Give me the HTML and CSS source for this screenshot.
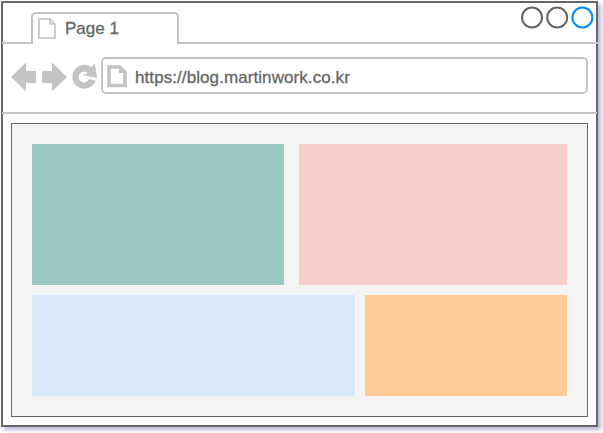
FILE: index.html
```
<!DOCTYPE html>
<html lang="en">
<head>
<meta charset="utf-8">
<title>Page 1</title>
<link rel="stylesheet" href="styles.css">
</head>
<body>
<div class="window">
  <header class="tabs">
    <div class="tab-lead"></div>
    <div class="tab">
      <svg class="tab-icon" width="18" height="21" viewBox="0 0 18 21"><path d="M1 1H12L17 6V20H1Z M12 1V6H17" fill="none" stroke="#c4c4c4" stroke-width="1.7"/></svg>
      <span>Page 1</span>
    </div>
    <div class="tab-rest">
      <svg class="controls" width="76" height="26" viewBox="0 0 76 26" fill="none" stroke-width="2"><circle cx="12" cy="13.5" r="10" stroke="#666"/><circle cx="37.2" cy="13.5" r="10" stroke="#666"/><circle cx="62.4" cy="13.5" r="10" stroke="#008cff"/></svg>
    </div>
  </header>
  <nav class="toolbar">
    <svg class="nav-icons" width="88" height="30" viewBox="0 0 88 30" fill="#c4c4c4">
      <path d="M0 15L15 0.5V9H25V21H15V29.5Z"/>
      <path d="M56 15L41 0.5V9H31V21H41V29.5Z"/>
      <path d="M80.5 5L83.7 1.5L86.2 15.9L71.7 13.1L76.8 11.2A5.4 5.4 0 1 0 78 17L84.7 18.8A12 12 0 1 1 80.5 5Z"/>
    </svg>
    <div class="address">
      <svg class="page-icon" width="20" height="23" viewBox="0 0 20 23"><path d="M2 2H13L18 7.3V20.5H2Z" fill="none" stroke="#c4c4c4" stroke-width="3.6"/><path d="M12 3L17 8H12Z" fill="#c4c4c4"/></svg>
      <span>https://blog.martinwork.co.kr</span>
    </div>
  </nav>
  <main class="content">
    <div class="row row-top"><div class="block green"></div><div class="block pink"></div></div>
    <div class="row row-bottom"><div class="block blue"></div><div class="block orange"></div></div>
  </main>
</div>
</body>
</html>
```
FILE: styles.css
```
* { box-sizing: border-box; }
body {
  margin: 0;
  height: 433px;
  padding: 1px 0 0 1px;
  background: #fff;
  overflow: hidden;
  color: #666;
  font: 17px/20px "Liberation Sans", Arial, sans-serif;
  -webkit-text-stroke: 0.3px #666;
}
.window {
  width: 597px;
  height: 426px;
  border: 2px solid #666;
  background: #fff;
  box-shadow: 3px 3px 4px #b9b9d6;
}
.tabs {
  display: flex;
  height: 41px;
  margin: 0 -2px 0 -1px;
}
.tab-lead {
  width: 30px;
  border-bottom: 2px solid #c4c4c4;
}
.tab {
  display: flex;
  align-items: center;
  width: 148px;
  height: 32px;
  margin: 9px -1px 0 -1px;
  padding: 0 0 1px 5px;
  border: 2px solid #c4c4c4;
  border-bottom: 0;
  border-radius: 5px 5px 0 0;
}
.tab span { margin-left: 9px; }
.tab-icon, .controls, .nav-icons, .page-icon {
  display: block;
  flex: none;
}
.tab-rest {
  display: flex;
  flex: 1;
  justify-content: flex-end;
  padding: 1px 2px 0 0;
  border-bottom: 2px solid #c4c4c4;
}
.toolbar {
  display: flex;
  align-items: flex-start;
  height: 70px;
  margin: 0 -1px;
  padding: 13px 9px 0;
  border-bottom: 2px solid #c4c4c4;
}
.nav-icons { margin: 5px 2px 0 0; }
.page-icon { margin-top: 1px; }
.address {
  display: flex;
  align-items: center;
  width: 487px;
  flex: none;
  height: 37px;
  padding-left: 4px;
  border: 2px solid #c4c4c4;
  border-radius: 5px;
}
.address span {
  margin: 4px 0 0 8px;
  letter-spacing: 0.08px;
}
.content {
  display: flex;
  flex-direction: column;
  gap: 10px;
  width: 577px;
  height: 294px;
  margin: 9px 0 0 8px;
  padding: 20px;
  border: 1px solid #666;
  background: #f4f4f4;
}
.row { display: flex; }
.row-top { height: 141px; gap: 15px; }
.row-bottom { height: 101px; gap: 10px; }
.green { width: 252.4px; background: #9ac7bf; }
.pink { width: 267.6px; background: #f8cecc; }
.blue { width: 323px; background: #dae8fc; }
.orange { width: 202px; background: #ffcc99; }
```
